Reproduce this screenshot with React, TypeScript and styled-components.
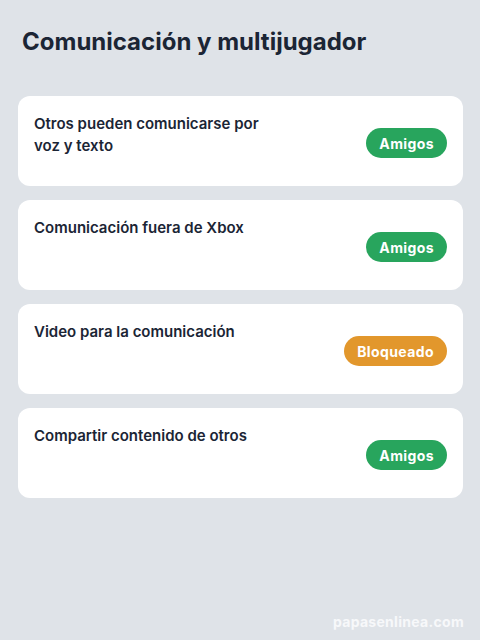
import styled, { createGlobalStyle } from 'styled-components';

const GlobalStyle = createGlobalStyle`
  html, body {
    margin: 0;
    padding: 0;
    background: #dfe3e8;
  }
  body {
    font-family: Inter, "Noto Sans", "Liberation Sans", sans-serif;
  }
`;

const Page = styled.div`
  width: 480px;
  height: 640px;
  box-sizing: border-box;
  padding: 26px 17px 0 18px;
  display: flex;
  flex-direction: column;
  position: relative;
`;

const Title = styled.h1`
  margin: 0 0 0 4px;
  font-size: 24px;
  line-height: 32px;
  font-weight: 700;
  color: #1b2535;
  letter-spacing: 0;
`;

const List = styled.div`
  margin-top: 38px;
  display: flex;
  flex-direction: column;
  gap: 14px;
`;

const Card = styled.div`
  background: #ffffff;
  border-radius: 12px;
  height: 90px;
  box-sizing: border-box;
  padding: 17px 16px 16px;
  display: flex;
  align-items: center;
  justify-content: space-between;
`;

const Label = styled.div`
  align-self: flex-start;
  max-width: 240px;
  font-size: 15px;
  line-height: 22px;
  font-weight: 600;
  color: #1b2535;
`;

const Badge = styled.span<{ $tone: 'green' | 'orange' }>`
  margin-top: 3px;
  height: 30px;
  padding: 0 13px;
  border-radius: 15px;
  display: inline-flex;
  align-items: center;
  font-size: 14px;
  font-weight: 700;
  letter-spacing: 0.4px;
  color: #ffffff;
  background: ${(p) => (p.$tone === 'green' ? '#28a55d' : '#e2972c')};
`;

const Footer = styled.div`
  position: absolute;
  right: 16px;
  bottom: 10px;
  font-size: 14px;
  font-weight: 700;
  color: #f7f8fa;
  letter-spacing: 0.3px;
`;

const rows: { label: string; status: string; tone: 'green' | 'orange' }[] = [
  { label: 'Otros pueden comunicarse por voz y texto', status: 'Amigos', tone: 'green' },
  { label: 'Comunicación fuera de Xbox', status: 'Amigos', tone: 'green' },
  { label: 'Video para la comunicación', status: 'Bloqueado', tone: 'orange' },
  { label: 'Compartir contenido de otros', status: 'Amigos', tone: 'green' },
];

const App = () => {
  return (
    <>
      <GlobalStyle />
      <Page>
        <Title>Comunicación y multijugador</Title>
        <List>
          {rows.map((r) => (
            <Card key={r.label}>
              <Label>{r.label}</Label>
              <Badge $tone={r.tone}>{r.status}</Badge>
            </Card>
          ))}
        </List>
        <Footer>papasenlinea.com</Footer>
      </Page>
    </>
  );
};

export default App;
